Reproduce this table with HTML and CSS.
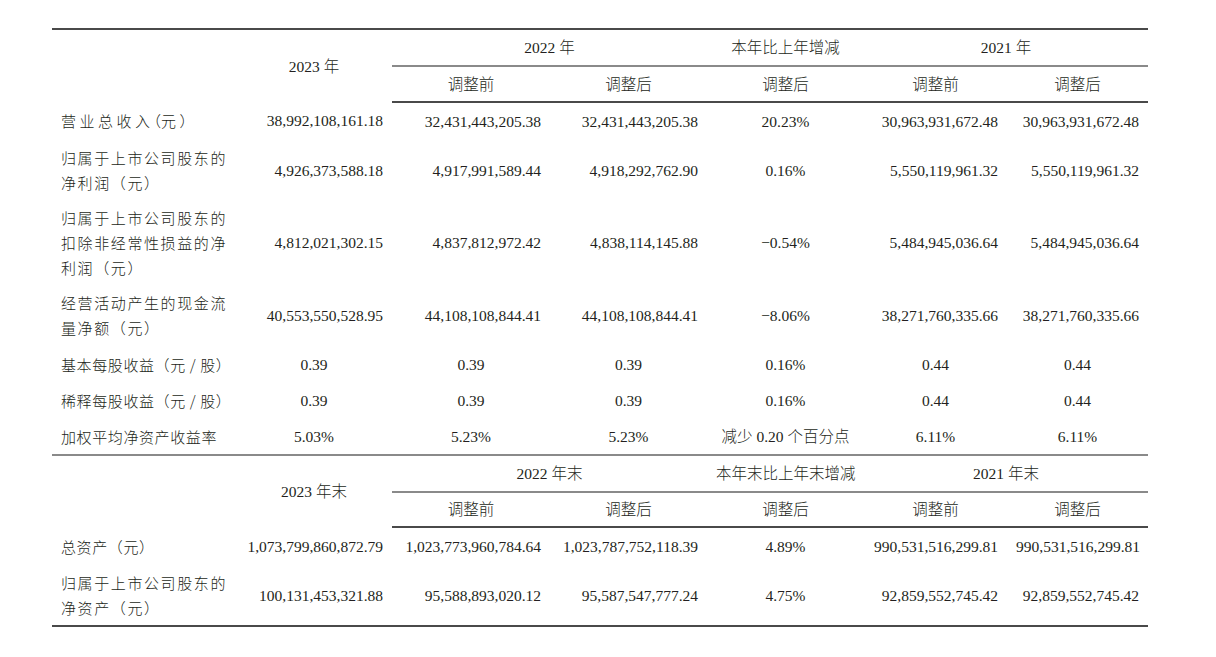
FILE: index.html
```html
<!DOCTYPE html>
<html lang="zh-CN">
<head>
<meta charset="utf-8">
<title>主要会计数据</title>
<link rel="stylesheet" href="styles.css">
</head>
<body>
<table class="fin">
  <colgroup>
    <col class="c-label"><col class="c-2023"><col class="c-a"><col class="c-b"><col class="c-chg"><col class="c-d"><col class="c-e">
  </colgroup>
  <tbody>
    <tr class="h1 rule-top">
      <td rowspan="2" class="label"></td>
      <td rowspan="2">2023 年</td>
      <td colspan="2" class="sub-rule">2022 年</td>
      <td class="sub-rule">本年比上年增减</td>
      <td colspan="2" class="sub-rule">2021 年</td>
    </tr>
    <tr class="h2 rule-mid">
      <td>调整前</td><td>调整后</td><td>调整后</td><td>调整前</td><td>调整后</td>
    </tr>
    <tr class="r1">
      <td class="label sp3">营业总收入<span class="hw">（</span>元<span class="hw">）</span></td>
      <td class="num">38,992,108,161.18</td>
      <td class="num">32,431,443,205.38</td>
      <td class="num">32,431,443,205.38</td>
      <td>20.23%</td>
      <td class="num">30,963,931,672.48</td>
      <td class="num">30,963,931,672.48</td>
    </tr>
    <tr class="r2">
      <td class="label sp2">归属于上市公司股东的<br>净利润（元）</td>
      <td class="num">4,926,373,588.18</td>
      <td class="num">4,917,991,589.44</td>
      <td class="num">4,918,292,762.90</td>
      <td>0.16%</td>
      <td class="num">5,550,119,961.32</td>
      <td class="num">5,550,119,961.32</td>
    </tr>
    <tr class="r3">
      <td class="label sp2">归属于上市公司股东的<br>扣除非经常性损益的净<br>利润（元）</td>
      <td class="num">4,812,021,302.15</td>
      <td class="num">4,837,812,972.42</td>
      <td class="num">4,838,114,145.88</td>
      <td>−0.54%</td>
      <td class="num">5,484,945,036.64</td>
      <td class="num">5,484,945,036.64</td>
    </tr>
    <tr class="r4">
      <td class="label sp2">经营活动产生的现金流<br>量净额（元）</td>
      <td class="num">40,553,550,528.95</td>
      <td class="num">44,108,108,844.41</td>
      <td class="num">44,108,108,844.41</td>
      <td>−8.06%</td>
      <td class="num">38,271,760,335.66</td>
      <td class="num">38,271,760,335.66</td>
    </tr>
    <tr class="r5">
      <td class="label sp1">基本每股收益（元 / 股）</td>
      <td>0.39</td><td>0.39</td><td>0.39</td><td>0.16%</td><td>0.44</td><td>0.44</td>
    </tr>
    <tr class="r6">
      <td class="label sp1">稀释每股收益（元 / 股）</td>
      <td>0.39</td><td>0.39</td><td>0.39</td><td>0.16%</td><td>0.44</td><td>0.44</td>
    </tr>
    <tr class="r7 rule-sec">
      <td class="label sp1">加权平均净资产收益率</td>
      <td>5.03%</td><td>5.23%</td><td>5.23%</td><td>减少 0.20 个百分点</td><td>6.11%</td><td>6.11%</td>
    </tr>
    <tr class="h1">
      <td rowspan="2" class="label"></td>
      <td rowspan="2">2023 年末</td>
      <td colspan="2" class="sub-rule">2022 年末</td>
      <td class="sub-rule">本年末比上年末增减</td>
      <td colspan="2" class="sub-rule">2021 年末</td>
    </tr>
    <tr class="h2b rule-mid">
      <td>调整前</td><td>调整后</td><td>调整后</td><td>调整前</td><td>调整后</td>
    </tr>
    <tr class="r8">
      <td class="label sp1">总资产（元）</td>
      <td class="num">1,073,799,860,872.79</td>
      <td class="num">1,023,773,960,784.64</td>
      <td class="num">1,023,787,752,118.39</td>
      <td>4.89%</td>
      <td class="num">990,531,516,299.81</td>
      <td class="num">990,531,516,299.81</td>
    </tr>
    <tr class="r9 rule-bottom">
      <td class="label sp2">归属于上市公司股东的<br>净资产（元）</td>
      <td class="num">100,131,453,321.88</td>
      <td class="num">95,588,893,020.12</td>
      <td class="num">95,587,547,777.24</td>
      <td>4.75%</td>
      <td class="num">92,859,552,745.42</td>
      <td class="num">92,859,552,745.42</td>
    </tr>
  </tbody>
</table>
</body>
</html>
```
FILE: styles.css
```css
html, body {
  margin: 0;
  background: #ffffff;
}
body {
  padding: 28px 0 0 52px;
  color: #231f20;
  font-family: "Liberation Serif", "Noto Sans CJK SC", serif;
  font-size: 15.5px;
}
.fin {
  border-collapse: collapse;
  table-layout: fixed;
  width: 1096px;
}
.c-label { width: 184px; }
.c-2023 { width: 156px; }
.c-a { width: 158px; }
.c-b { width: 157px; }
.c-chg { width: 157px; }
.c-d { width: 143px; }
.c-e { width: 141px; }

.fin td {
  padding: 0 9px;
  text-align: center;
  vertical-align: middle;
  line-height: 25px;
  white-space: nowrap;
  font-weight: 300;
}
.fin td.num { text-align: right; }
.fin td.label {
  text-align: left;
  font-family: "Noto Sans CJK SC", sans-serif;
  font-size: 15px;
  font-weight: 300;
}
.sp1 { letter-spacing: 0.6px; }
.sp2 { letter-spacing: 1.6px; }
.sp3 { letter-spacing: 3.5px; }
.hw {
  font-feature-settings: "halt";
  letter-spacing: 0;
}

.rule-top td { border-top: 2px solid #4a4a4a; }
.sub-rule { border-bottom: 2px solid #8a8a8a; }
.rule-mid td { border-bottom: 2px solid #4a4a4a; }
.rule-sec td { border-bottom: 2px solid #8a8a8a; }
.rule-bottom td { border-bottom: 2px solid #4a4a4a; }

.h1 td { height: 35px; }
.h2 td { height: 34px; }
.h2b td { height: 33px; }
.r1 td { height: 36px; }
.r2 td { height: 62px; }
.r3 td { height: 83px; }
.r4 td { height: 62px; }
.r5 td { height: 36px; }
.r6 td { height: 37px; }
.r7 td { height: 35px; }
.r8 td { height: 37px; }
.r9 td { height: 60px; }
```
